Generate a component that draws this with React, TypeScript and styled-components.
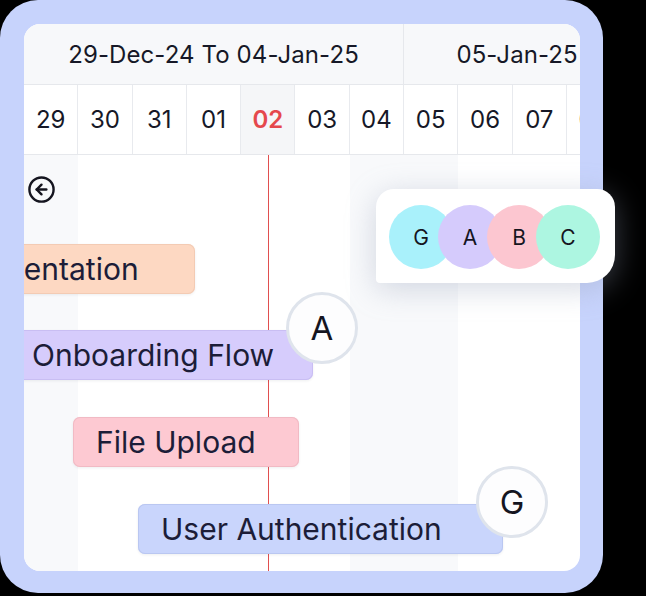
import React from 'react'
import styled, { createGlobalStyle } from 'styled-components'
import { CircleArrowLeft } from 'lucide-react'

const COL = 54.3

const weeks = ['29-Dec-24 To 04-Jan-25', '05-Jan-25 To 11-Jan-25']

const days = [
  { n: '29', weekend: true },
  { n: '30' },
  { n: '31' },
  { n: '01' },
  { n: '02', today: true },
  { n: '03' },
  { n: '04', weekend: true },
  { n: '05', weekend: true },
  { n: '06' },
  { n: '07' },
  { n: '08' },
  { n: '09' },
  { n: '10' },
  { n: '11', weekend: true },
]

const todayIndex = days.findIndex((d) => d.today)

const tasks = [
  { name: 'Documentation', left: -124, width: 295, color: '#fdd8c2', edge: '#f3cbb4' },
  { name: 'Onboarding Flow', left: -15, width: 304, color: '#d6ccfc', edge: '#c9bef3', owner: 'A' },
  { name: 'File Upload', left: 49, width: 226, color: '#fdc9d2', edge: '#f1bac4' },
  { name: 'User Authentication', left: 114, width: 365, color: '#c9d5fc', edge: '#bac7f1', owner: 'G' },
]

const team = [
  { letter: 'G', color: '#a9f1fb' },
  { letter: 'A', color: '#d5cbfc' },
  { letter: 'B', color: '#fcc6d0' },
  { letter: 'C', color: '#adf6e1' },
]

export default function App() {
  return (
    <>
      <GlobalStyle />
      <Frame>
        <Panel>
          <WeekRow>
            {weeks.map((w) => (
              <WeekCell key={w}>{w}</WeekCell>
            ))}
          </WeekRow>
          <DayRow>
            {days.map((d) => (
              <DayCell key={d.n} $today={!!d.today}>
                {d.n}
              </DayCell>
            ))}
          </DayRow>
          <Body>
            <Columns>
              {days.map((d) => (
                <Column key={d.n} $weekend={!!d.weekend} />
              ))}
            </Columns>
            <TodayLine style={{ marginLeft: todayIndex * COL + COL / 2 - 0.8 }} />
            <Rows>
              <BackButton>
                <CircleArrowLeft size={29} strokeWidth={2} color="#15151f" />
              </BackButton>
              {tasks.map((t) => (
                <Bar
                  key={t.name}
                  $color={t.color}
                  $edge={t.edge}
                  style={{ marginLeft: t.left, width: t.width }}
                >
                  {t.name}
                  {t.owner && <Owner>{t.owner}</Owner>}
                </Bar>
              ))}
            </Rows>
          </Body>
        </Panel>
        <TeamCard>
          {team.map((m) => (
            <Member key={m.letter} $color={m.color}>
              {m.letter}
            </Member>
          ))}
        </TeamCard>
      </Frame>
    </>
  )
}

const GlobalStyle = createGlobalStyle`
  html, body {
    margin: 0;
    padding: 0;
    background: #000;
  }
  body {
    font-family: Inter, "Noto Sans", sans-serif;
    color: #161827;
  }
`

const Frame = styled('div')`
  position: relative;
  width: 603px;
  height: 593px;
  box-sizing: border-box;
  padding: 24px 23px 22px 24px;
  border-radius: 38px;
  background: #c7d3fc;
`

const Panel = styled('div')`
  display: flex;
  flex-direction: column;
  height: 100%;
  border-radius: 16px;
  background: #fff;
  overflow: hidden;
`

const WeekRow = styled('div')`
  display: flex;
  flex: none;
  height: 61px;
  box-sizing: border-box;
  background: #f7f8fa;
  border-bottom: 1px solid #e6e8ec;
`

const WeekCell = styled('div')`
  flex: none;
  width: ${COL * 7}px;
  box-sizing: border-box;
  display: flex;
  align-items: center;
  justify-content: center;
  border-right: 1px solid #e6e8ec;
  font-size: 24px;
  white-space: nowrap;
  letter-spacing: 0.1px;
`

const DayRow = styled('div')`
  display: flex;
  flex: none;
  height: 70px;
  box-sizing: border-box;
  border-bottom: 1px solid #e6e8ec;
`

const DayCell = styled('div')<{ $today: boolean }>`
  flex: none;
  width: ${COL}px;
  box-sizing: border-box;
  display: flex;
  align-items: center;
  justify-content: center;
  border-right: 1px solid #e8eaee;
  background: ${({ $today }) => ($today ? '#f5f6f8' : '#fff')};
  color: ${({ $today }) => ($today ? '#e5484d' : '#161827')};
  font-weight: ${({ $today }) => ($today ? 600 : 400)};
  font-size: 24px;
`

const Body = styled('div')`
  flex: 1;
  display: grid;
  min-height: 0;

  & > * {
    grid-area: 1 / 1;
  }
`

const Columns = styled('div')`
  display: flex;
`

const Column = styled('div')<{ $weekend: boolean }>`
  flex: none;
  width: ${COL}px;
  background: ${({ $weekend }) => ($weekend ? '#f8f9fb' : 'transparent')};
`

const TodayLine = styled('div')`
  justify-self: start;
  width: 1.6px;
  background: #e14f4f;
`

const Rows = styled('div')`
  display: flex;
  flex-direction: column;
  align-items: flex-start;
  gap: 36.7px;
  padding-top: 20px;
`

const BackButton = styled('div')`
  display: flex;
  margin-left: 3px;
  margin-bottom: 3px;
  cursor: pointer;
`

const Bar = styled('div')<{ $color: string; $edge: string }>`
  position: relative;
  flex: none;
  height: 50px;
  box-sizing: border-box;
  display: flex;
  align-items: center;
  padding-left: 23px;
  border-radius: 7px;
  background: ${({ $color }) => $color};
  box-shadow: inset 0 0 0 1px ${({ $edge }) => $edge}, 0 1px 3px rgba(15, 23, 42, 0.07);
  font-size: 30px;
  color: #1c1d38;
  white-space: nowrap;
`

const Owner = styled('div')`
  position: absolute;
  top: -38px;
  right: -45px;
  width: 72px;
  height: 72px;
  box-sizing: border-box;
  display: flex;
  align-items: center;
  justify-content: center;
  border-radius: 50%;
  border: 3px solid #dfe4ec;
  background: #fdfdfe;
  font-size: 33px;
  color: #15151f;
`

const TeamCard = styled('div')`
  position: absolute;
  left: 376px;
  top: 189px;
  display: flex;
  padding: 16px 15px 14px 13px;
  border-radius: 18px 18px 28px 4px;
  background: #fff;
  box-shadow: 0 6px 30px rgba(150, 160, 185, 0.4);
`

const Member = styled('div')<{ $color: string }>`
  width: 64px;
  height: 64px;
  display: flex;
  align-items: center;
  justify-content: center;
  border-radius: 50%;
  background: ${({ $color }) => $color};
  font-size: 21px;
  color: #15151f;

  & + & {
    margin-left: -15px;
  }
`
